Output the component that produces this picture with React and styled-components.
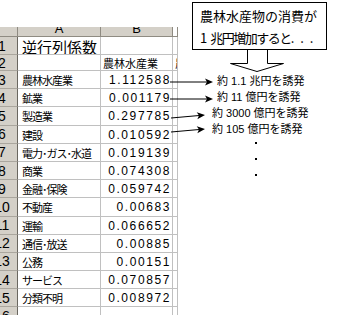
import React from 'react';
import styled, { createGlobalStyle } from 'styled-components';

const GlobalStyle = createGlobalStyle`
  html, body {
    margin: 0;
    padding: 0;
    background: #fff;
  }
  body {
    font-family: "Noto Sans CJK JP", sans-serif;
    color: #000;
  }
`;

const Page = styled.div`
  position: relative;
  display: flex;
  width: 338px;
  height: 315px;
  overflow: hidden;
  background: #fff;
`;

const Sheet = styled.div`
  flex: none;
  display: flex;
  flex-direction: column;
  width: 178px;
  height: 288px;
  margin-top: 27px;
  overflow: hidden;
`;

const Row = styled.div`
  flex: none;
  display: grid;
  grid-template-columns: 18px 83px 72px 5px;
  height: ${p => p.$h}px;
`;

const RowHead = styled.div`
  box-sizing: border-box;
  overflow: hidden;
  display: flex;
  align-items: center;
  background: #d4d0c8;
  border-right: 1px solid #6a6760;
  border-bottom: 1px solid #aaa69e;
  font-family: "Liberation Sans", Arial, sans-serif;
  font-size: 14px;
`;

const RowNum = styled.span`
  flex: none;
  width: 30px;
  margin-left: -13px;
  text-align: center;
`;

const ColHead = styled.div`
  box-sizing: border-box;
  overflow: hidden;
  background: ${p => (p.$blank ? '#fff' : '#d4d0c8')};
  border-right: 1px solid #8f8b82;
  border-bottom: 1px solid #8f8b82;
  font-family: "Liberation Sans", Arial, sans-serif;
  font-size: 13px;
  text-align: center;
`;

const ColLetter = styled.div`
  line-height: 17px;
  margin-top: -7px;
`;

const Cell = styled.div`
  box-sizing: border-box;
  overflow: hidden;
  white-space: nowrap;
  display: flex;
  align-items: center;
  justify-content: ${p => (p.$num ? 'flex-end' : 'flex-start')};
  padding: 1px ${p => (p.$num ? 1 : 0)}px 0 ${p => p.$pad ?? 4}px;
  border-right: 1px solid #c0c0c0;
  border-bottom: 1px solid #c0c0c0;
  font-family: ${p => (p.$num ? '"Liberation Sans", Arial, sans-serif' : '"Noto Sans CJK JP", sans-serif')};
  font-size: ${p => (p.$num ? 12 : p.$size || 11)}px;
  letter-spacing: ${p => (p.$num ? 1.6 : p.$tight ? -1 : 0)}px;
`;

const Panel = styled.div`
  flex: none;
  display: flex;
  flex-direction: column;
  width: 160px;
`;

const Callout = styled.div`
  box-sizing: border-box;
  width: 135px;
  height: 48px;
  margin: 2px 0 0 14px;
  padding: 2px 0 0 7px;
  border: 1px solid #000;
  font-size: 13px;
  line-height: 22px;
  white-space: nowrap;
`;

const Squeezed = styled.span`
  letter-spacing: -1.5px;
`;

const Ellipsis = styled.span`
  letter-spacing: 1.5px;
`;

const DownArrow = styled.svg`
  display: block;
  margin-left: 52px;
`;

const Results = styled.div`
  display: flex;
  flex-direction: column;
  margin-top: 1px;
  font-family: "Liberation Sans", "Noto Sans CJK JP", sans-serif;
  font-size: 11px;
  line-height: 16px;
`;

const Result = styled.div`
  margin-left: ${p => p.$indent}px;
  white-space: nowrap;
`;

const Dots = styled.div`
  display: flex;
  flex-direction: column;
  gap: 14px;
  margin: 5px 0 0 77px;
`;

const Dot = styled.span`
  width: 2px;
  height: 2px;
  background: #000;
`;

const Overlay = styled.svg`
  position: absolute;
  left: 0;
  top: 0;
  pointer-events: none;
`;

const rows = [
  ['農林水産業', '1.112588'],
  ['鉱業', '0.001179'],
  ['製造業', '0.297785'],
  ['建設', '0.010592'],
  ['電力･ガス･水道', '0.019139'],
  ['商業', '0.074308'],
  ['金融･保険', '0.059742'],
  ['不動産', '0.00683'],
  ['運輸', '0.066652'],
  ['通信･放送', '0.00885'],
  ['公務', '0.00151'],
  ['サービス', '0.070857'],
  ['分類不明', '0.008972'],
];

const results = [
  { text: '約 1.1 兆円を誘発', indent: 39 },
  { text: '約 11 億円を誘発', indent: 39 },
  { text: '約 3000 億円を誘発', indent: 34 },
  { text: '約 105 億円を誘発', indent: 34 },
];

const connectors = [
  [170, 82, 213, 82],
  [170, 99, 213, 99],
  [171, 118, 205, 115],
  [171, 132, 205, 129],
];

const Connector = ({ x1, y1, x2, y2 }) => {
  const angle = Math.atan2(y2 - y1, x2 - x1);
  const ex = x2 - Math.cos(angle) * 6;
  const ey = y2 - Math.sin(angle) * 6;
  return (
    <g>
      <line x1={x1} y1={y1} x2={ex} y2={ey} stroke="#000" strokeWidth="1" />
      <polygon
        points="0,0 -8,-3.5 -6,0 -8,3.5"
        fill="#000"
        transform={`translate(${x2} ${y2}) rotate(${(angle * 180) / Math.PI})`}
      />
    </g>
  );
};

export default function App() {
  return (
    <>
      <GlobalStyle />
      <Page>
        <Sheet>
          <Row $h={10}>
            <ColHead />
            <ColHead><ColLetter>A</ColLetter></ColHead>
            <ColHead><ColLetter>B</ColLetter></ColHead>
            <ColHead $blank />
          </Row>
          <Row $h={18}>
            <RowHead><RowNum>1</RowNum></RowHead>
            <Cell $size={15}>逆行列係数</Cell>
            <Cell />
            <Cell />
          </Row>
          <Row $h={16}>
            <RowHead><RowNum>2</RowNum></RowHead>
            <Cell />
            <Cell $pad={2}>農林水産業</Cell>
            <Cell $pad={2}>農林水産業</Cell>
          </Row>
          {rows.map(([name, value], i) => (
            <Row $h={18.2} key={name}>
              <RowHead><RowNum>{i + 3}</RowNum></RowHead>
              <Cell $tight>{name}</Cell>
              <Cell $num>{value}</Cell>
              <Cell />
            </Row>
          ))}
          <Row $h={18}>
            <RowHead><RowNum>16</RowNum></RowHead>
            <Cell />
            <Cell />
            <Cell />
          </Row>
        </Sheet>

        <Panel>
          <Callout>
            <div>農林水産物の消費が</div>
            <div>
              1 <Squeezed>兆円増加すると</Squeezed><Ellipsis>. . .</Ellipsis>
            </div>
          </Callout>
          <DownArrow width="56" height="22" viewBox="0 0 56 22">
            <polyline
              points="17.5,0 17.5,13.5 0.5,13.5 27,21.5 53.5,13.5 37.5,13.5 37.5,0"
              fill="#fff"
              stroke="#000"
              strokeWidth="1"
            />
          </DownArrow>
          <Results>
            {results.map(r => (
              <Result key={r.text} $indent={r.indent}>{r.text}</Result>
            ))}
          </Results>
          <Dots>
            <Dot />
            <Dot />
            <Dot />
          </Dots>
        </Panel>

        <Overlay width="338" height="315" viewBox="0 0 338 315">
          {connectors.map(([x1, y1, x2, y2]) => (
            <Connector key={`${y1}`} x1={x1} y1={y1} x2={x2} y2={y2} />
          ))}
        </Overlay>
      </Page>
    </>
  );
}
